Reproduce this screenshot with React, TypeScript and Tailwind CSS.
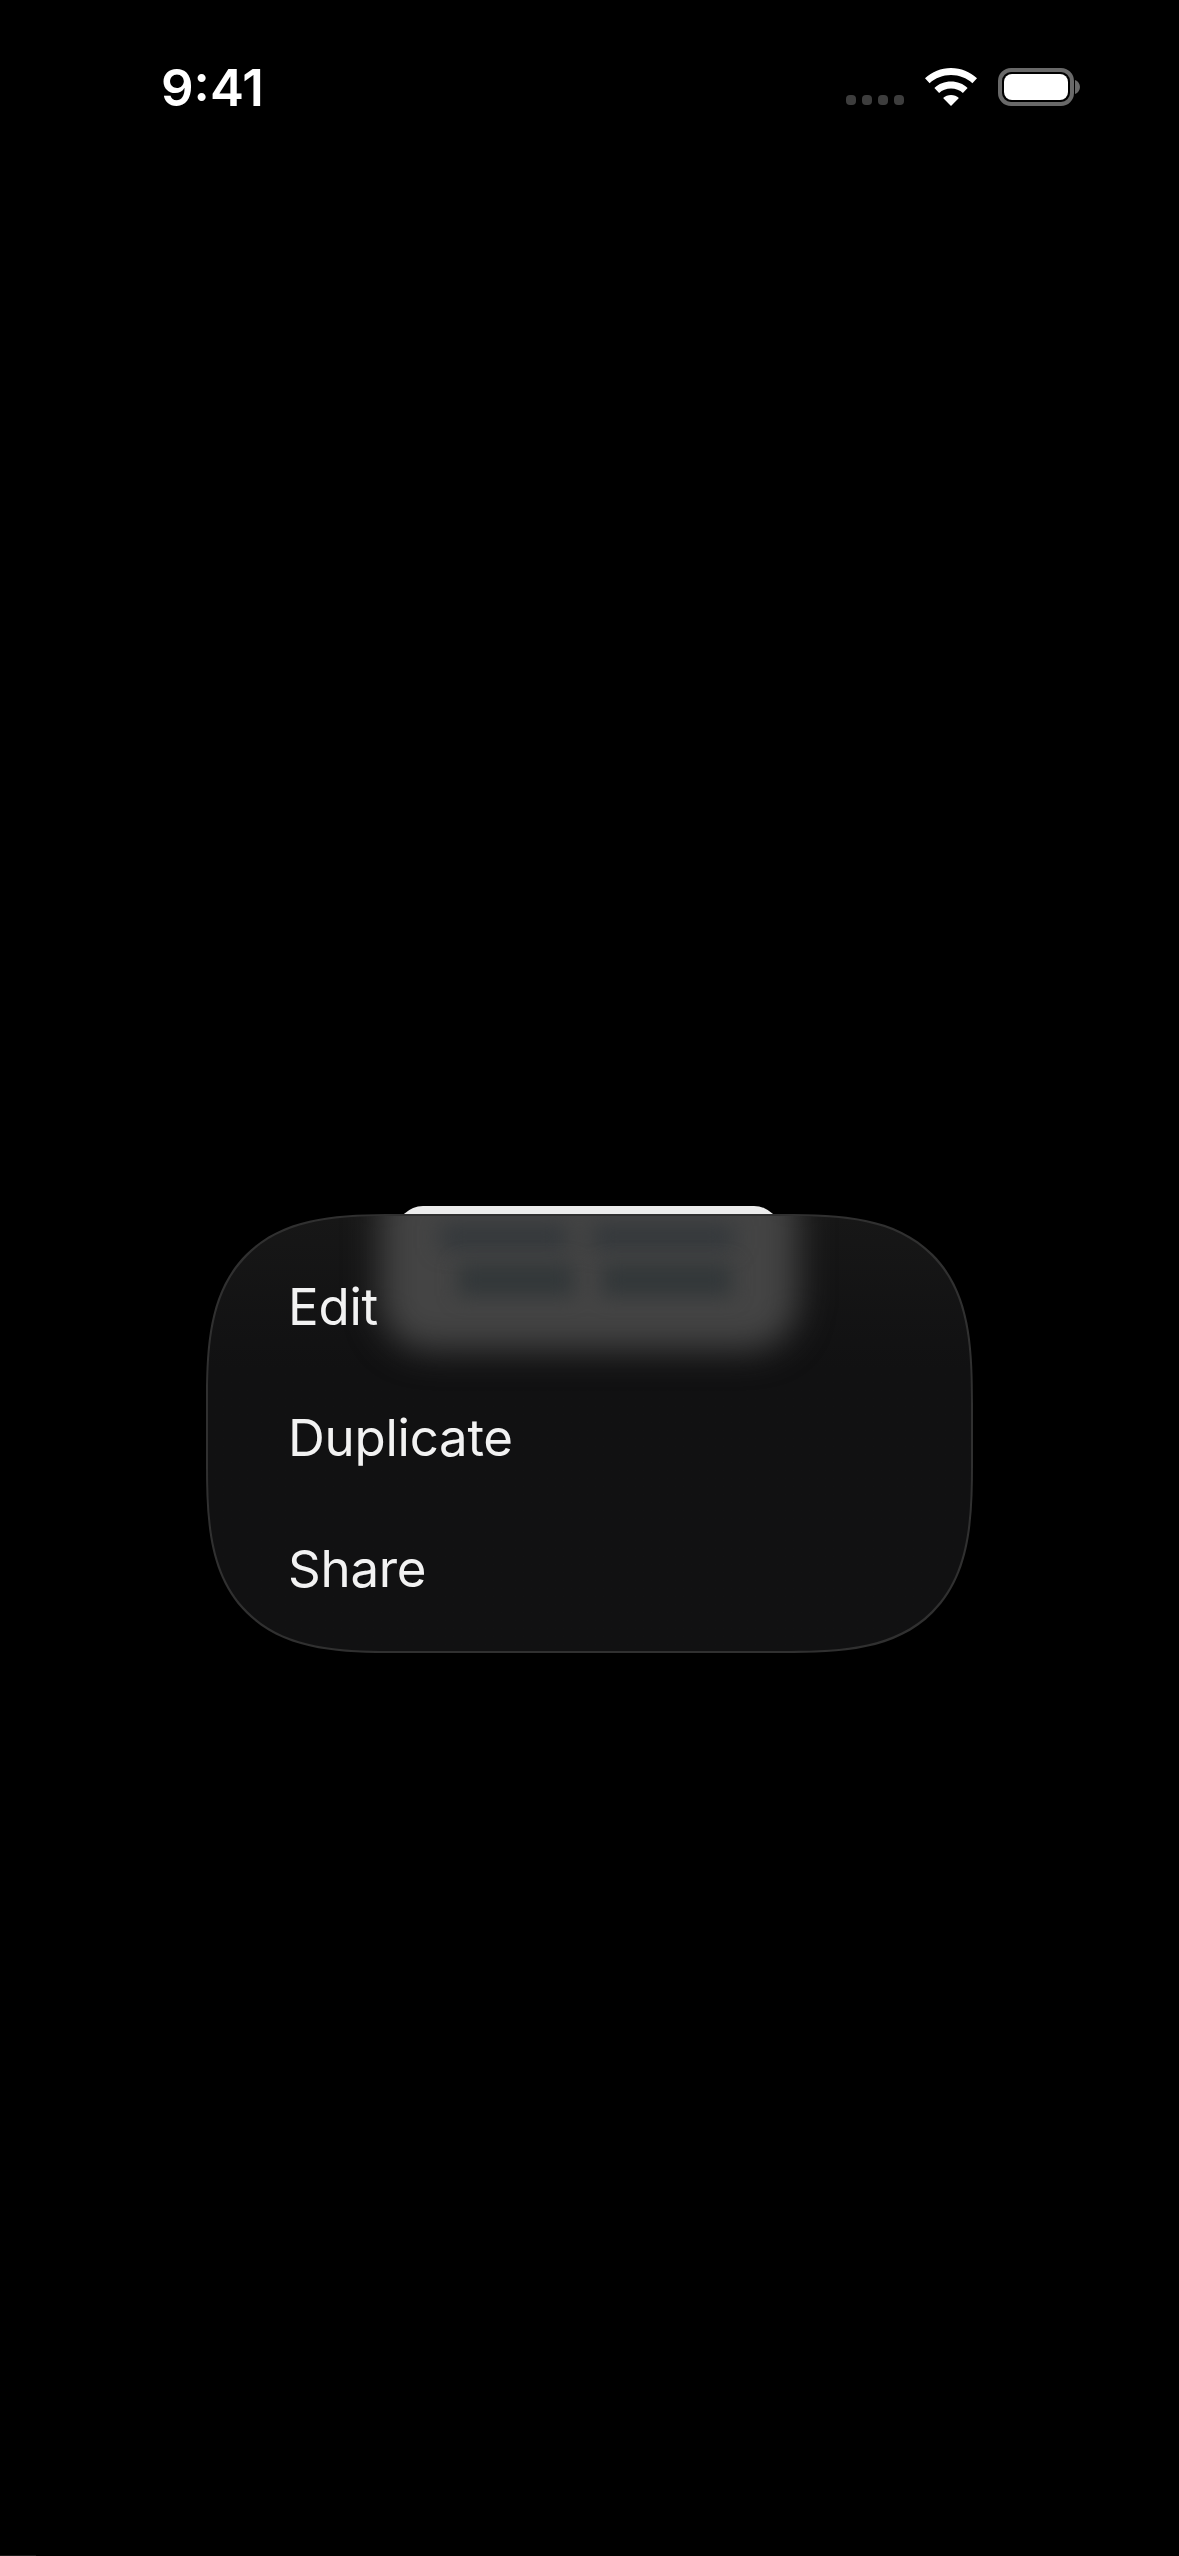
export default function App() {
  return (
    <div className="relative flex h-[2556px] w-[1179px] flex-col overflow-hidden bg-black" style={{ fontFamily: 'Inter, "Noto Sans", sans-serif' }}>
      <div className="flex h-[1206px] shrink-0 items-start justify-between pl-[161px] pr-[98px] pt-[60px]">
        <span className="text-[51px] font-semibold leading-[56px] text-white">9:41</span>
        <div className="flex items-center pt-[8px]">
          <div className="mr-[21px] mt-[25px] flex gap-[6px]">
            {[0, 1, 2, 3].map((i) => (
              <span key={i} className="h-[10px] w-[10px] rounded-[4px] bg-[#3d3d3d]" />
            ))}
          </div>
          <svg width="52" height="38" viewBox="0 0 52 38" className="mr-[21px]">
            <path d="M26 0C16 0 7 3.8 0 10.2l4.6 5C10.4 10 17.8 7 26 7s15.6 3 21.4 8.2l4.6-5C45 3.8 36 0 26 0z" fill="#fff" />
            <path d="M26 13.5c-6.4 0-12.2 2.4-16.6 6.4l4.7 5.1c3.1-2.8 7.3-4.5 11.9-4.5s8.8 1.7 11.9 4.5l4.7-5.1c-4.4-4-10.2-6.4-16.6-6.4z" fill="#fff" />
            <path d="M26 27c-3 0-5.8 1.1-7.9 3L26 38l7.9-8c-2.1-1.9-4.9-3-7.9-3z" fill="#fff" />
          </svg>
          <div className="flex items-center">
            <div className="flex h-[38px] w-[76px] rounded-[13px] border-[4px] border-[#696969] p-[2px]">
              <div className="flex-1 rounded-[8px] bg-white" />
            </div>
            <svg width="6" height="14" viewBox="0 0 6 14" className="ml-[1px]">
              <path d="M0 0c3 1 5 4 5 7s-2 6-5 7z" fill="#696969" />
            </svg>
          </div>
        </div>
      </div>
      <div className="relative ml-[206px] w-[767px]">
        <div className="absolute left-[191px] top-0 h-[60px] w-[383px] rounded-t-[26px] bg-[#ececec]" />
        <div className="relative mt-[8px] flex h-[439px] flex-col justify-center overflow-hidden rounded-[190px] border-[2px] border-[#303030] bg-gradient-to-b from-[#171717] to-[#111112] to-35% pl-[80px] text-[51px] font-normal leading-[131px] tracking-[-0.25px] text-[#f2f2f2] [corner-shape:superellipse(1.55)]">
          <div className="absolute left-[172px] top-[-50px] h-[184px] w-[418px] rounded-[50px] bg-[#444444] blur-[17px]" />
          <div className="absolute left-[232px] top-[10px] flex gap-[24px] blur-[11px]">
            <div className="h-[22px] w-[128px] bg-[#31363a]" />
            <div className="h-[22px] w-[142px] bg-[#31363a]" />
          </div>
          <div className="absolute left-[250px] top-[48px] flex gap-[28px] blur-[10px]">
            <div className="h-[32px] w-[116px] bg-[#323739]" />
            <div className="h-[32px] w-[130px] bg-[#323739]" />
          </div>
          <span className="relative top-[4px]">Edit</span>
          <span className="relative top-[4px]">Duplicate</span>
          <span className="relative top-[4px]">Share</span>
        </div>
      </div>
      <div className="mt-auto h-[1px] w-[36px] bg-[#1a1a1a]" />
    </div>
  );
}
